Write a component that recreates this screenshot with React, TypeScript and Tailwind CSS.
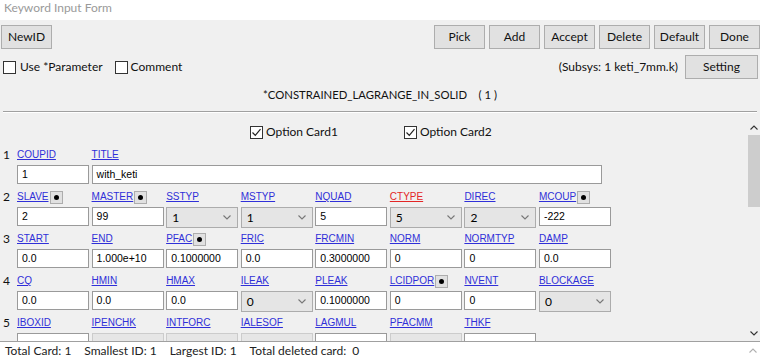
import React from "react";

type Field = {
  label: string;
  value?: string;
  kind?: "input" | "select" | "disabled";
  pin?: boolean;
  red?: boolean;
  wide?: boolean;
};

const rows: Field[][] = [
  [
    { label: "COUPID", value: "1" },
    { label: "TITLE", value: "with_keti", wide: true },
  ],
  [
    { label: "SLAVE", value: "2", pin: true },
    { label: "MASTER", value: "99", pin: true },
    { label: "SSTYP", value: "1", kind: "select" },
    { label: "MSTYP", value: "1", kind: "select" },
    { label: "NQUAD", value: "5" },
    { label: "CTYPE", value: "5", kind: "select", red: true },
    { label: "DIREC", value: "2", kind: "select" },
    { label: "MCOUP", value: "-222", pin: true },
  ],
  [
    { label: "START", value: "0.0" },
    { label: "END", value: "1.000e+10" },
    { label: "PFAC", value: "0.1000000", pin: true },
    { label: "FRIC", value: "0.0" },
    { label: "FRCMIN", value: "0.3000000" },
    { label: "NORM", value: "0" },
    { label: "NORMTYP", value: "0" },
    { label: "DAMP", value: "0.0" },
  ],
  [
    { label: "CQ", value: "0.0" },
    { label: "HMIN", value: "0.0" },
    { label: "HMAX", value: "0.0" },
    { label: "ILEAK", value: "0", kind: "select" },
    { label: "PLEAK", value: "0.1000000" },
    { label: "LCIDPOR", value: "0", pin: true },
    { label: "NVENT", value: "0" },
    { label: "BLOCKAGE", value: "0", kind: "select" },
  ],
  // last card is cut by the scroll view, values not visible
  [
    { label: "IBOXID" },
    { label: "IPENCHK", kind: "disabled" },
    { label: "INTFORC", kind: "disabled" },
    { label: "IALESOF", kind: "disabled" },
    { label: "LAGMUL" },
    { label: "PFACMM", kind: "disabled" },
    { label: "THKF" },
  ],
];

function Chevron({ up = false, className = "" }: { up?: boolean; className?: string }) {
  return (
    <svg width="8" height="5" viewBox="0 0 8 5" className={className}>
      <path
        d={up ? "M0.5 4.5 L4 1 L7.5 4.5" : "M0.5 0.5 L4 4 L7.5 0.5"}
        fill="none"
        stroke="currentColor"
        strokeWidth="1.1"
      />
    </svg>
  );
}

function CheckBox({ checked = false }: { checked?: boolean }) {
  return (
    <span className="w-[13px] h-[13px] border border-[#333] bg-white flex items-center justify-center shrink-0">
      {checked && (
        <svg width="11" height="11" viewBox="0 0 11 11">
          <path d="M1.5 5.5 L4.3 8.3 L9.5 2.2" fill="none" stroke="#222" strokeWidth="1.2" />
        </svg>
      )}
    </span>
  );
}

function Button({ label, w = "w-[51px]" }: { label: string; w?: string }) {
  return (
    <div
      className={`${w} h-[24px] bg-[#e1e1e1] border border-[#adadad] flex items-center justify-center text-[12px] text-[#111]`}
    >
      {label}
    </div>
  );
}

function Pin() {
  return (
    <span className="w-[13px] h-[13px] ml-[1px] bg-[#e1e1e1] border border-[#adadad] flex items-center justify-center">
      <span className="w-[5px] h-[5px] rounded-full bg-black" />
    </span>
  );
}

function FieldCell({ f }: { f: Field }) {
  const kind = f.kind ?? "input";
  return (
    <div className={`flex flex-col ${f.wide ? "col-span-7" : ""}`}>
      <div className="h-[16px] flex items-center">
        <span
          className={`underline text-[10px] leading-none font-['Liberation_Sans',sans-serif] ${
            f.red ? "text-[#e32626]" : "text-[#2f2fd8]"
          }`}
        >
          {f.label}
        </span>
        {f.pin && <Pin />}
      </div>
      <div className="mt-[2px]">
        {kind === "input" && (
          <div
            className={`${f.wide ? "w-[510px]" : "w-[72px]"} h-[19px] bg-white border border-[#9a9a9a] pl-[4px] flex items-center text-[10.5px] text-black font-['Liberation_Sans',sans-serif]`}
          >
            {f.value}
          </div>
        )}
        {kind === "select" && (
          <div className="w-[72px] h-[21px] bg-[#e5e5e5] border border-[#acacac] pl-[5px] pr-[6px] flex items-center justify-between text-[12px] text-black">
            <span>{f.value}</span>
            <Chevron className="text-[#777]" />
          </div>
        )}
        {kind === "disabled" && (
          <div className="w-[72px] h-[19px] bg-[#e6e6e6] border border-[#cccccc]" />
        )}
      </div>
    </div>
  );
}

export default function App() {
  return (
    <div className="w-[760px] h-[359px] bg-[#f0f0f0] flex flex-col overflow-hidden font-['Lato','Noto_Sans',sans-serif] text-[#111]">
      {/* title bar */}
      <div className="h-[20px] bg-white pl-[4px] text-[12px] leading-[15px] text-[#9a9a9a]">
        Keyword Input Form
      </div>

      {/* toolbar */}
      <div className="pt-[5px] pl-[1px] flex justify-between">
        <Button label="NewID" />
        <div className="flex gap-[4px]">
          {["Pick", "Add", "Accept", "Delete", "Default", "Done"].map((b) => (
            <Button key={b} label={b} />
          ))}
        </div>
      </div>

      {/* options row */}
      <div className="mt-[6px] h-[24px] flex items-center justify-between pr-[2px]">
        <div className="flex items-center text-[12px] pl-[3px]">
          <CheckBox />
          <span className="ml-[4px]">Use *Parameter</span>
          <span className="ml-[12px] flex items-center">
            <CheckBox />
            <span className="ml-[3px]">Comment</span>
          </span>
        </div>
        <div className="flex items-center text-[12px]">
          <span className="mr-[7px]">(Subsys: 1 keti_7mm.k)</span>
          <Button label="Setting" w="w-[73px]" />
        </div>
      </div>

      {/* keyword title */}
      <div className="h-[32px] flex items-center justify-center text-[11.3px] whitespace-pre">
        *CONSTRAINED_LAGRANGE_IN_SOLID    ( 1 )
      </div>

      {/* separator */}
      <div className="h-px mx-[3px] bg-[#a0a0a0]" />
      <div className="h-px mx-[3px] bg-white" />

      {/* scroll area */}
      <div className="flex-1 flex min-h-0">
        <div className="flex-1 overflow-hidden">
          <div className="pt-[9px] h-[29px] flex items-center text-[12px]">
            <span className="ml-[250px] flex items-center">
              <CheckBox checked />
              <span className="ml-[3px]">Option Card1</span>
            </span>
            <span className="ml-[66px] flex items-center">
              <CheckBox checked />
              <span className="ml-[3px]">Option Card2</span>
            </span>
          </div>
          <div className="mt-[5px]">
            {rows.map((row, i) => (
              <div key={i} className="flex h-[42px]">
                <div className="w-[17px] pl-[3px] h-[16px] flex items-center text-[12px]">{i + 1}</div>
                <div className="grid grid-cols-[repeat(8,72px)] gap-x-[2.57px] items-start">
                  {row.map((f) => (
                    <FieldCell key={f.label} f={f} />
                  ))}
                </div>
              </div>
            ))}
          </div>
        </div>
        {/* scrollbar */}
        <div className="w-[12px] mt-[7px] flex flex-col">
          <div className="h-[15px] flex items-center justify-center text-[#333]">
            <Chevron up />
          </div>
          <div className="h-[72px] bg-[#cdcdcd]" />
          <div className="flex-1" />
          <div className="h-[15px] flex items-center justify-center text-[#333]">
            <Chevron />
          </div>
        </div>
      </div>

      {/* status bar */}
      <div className="h-[18px] border-t border-[#a0a0a0] bg-white flex items-center justify-between pl-[5px] pr-[3px] text-[12px] text-[#222]">
        <div className="flex gap-[13px] whitespace-pre">
          <span>Total Card: 1</span>
          <span>Smallest ID: 1</span>
          <span>Largest ID: 1</span>
          <span>Total deleted card:  0</span>
        </div>
        <Chevron up className="text-[#b0b0b0]" />
      </div>
    </div>
  );
}
